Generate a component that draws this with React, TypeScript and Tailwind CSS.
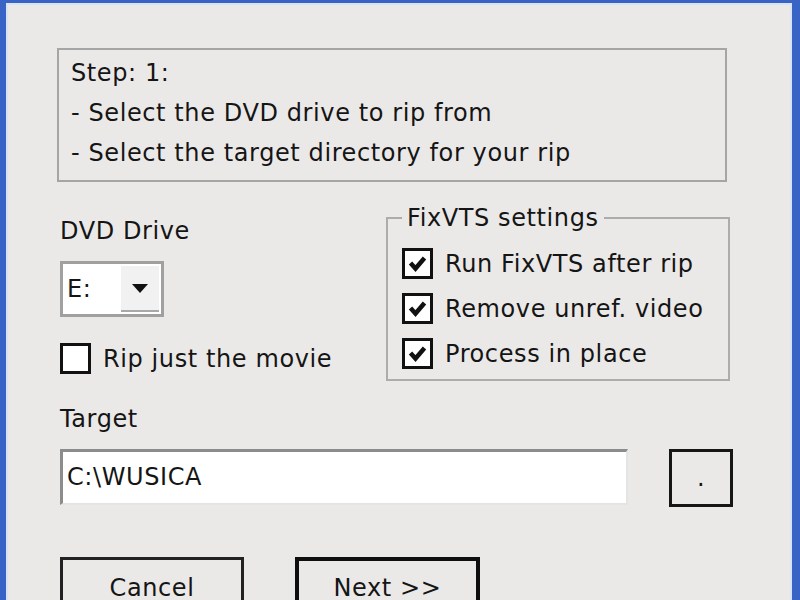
import React from "react";

const font = { fontFamily: '"DejaVu Sans", Verdana, sans-serif' };

function Check({ checked, label }: { checked: boolean; label: string }) {
  return (
    <div className="flex items-center">
      <div className="w-[31px] h-[31px] border-[3px] border-[#111] bg-white flex items-center justify-center shrink-0">
        {checked && (
          <svg width="19" height="17" viewBox="0 0 19 17">
            <path d="M2.5 8 L7.5 13.5 L16.5 3" fill="none" stroke="#111" strokeWidth="4.5" strokeLinejoin="miter" />
          </svg>
        )}
      </div>
      <span className="ml-[12px] text-[24px] leading-[28px] text-[#151515] whitespace-nowrap">{label}</span>
    </div>
  );
}

export default function App() {
  return (
    <div
      className="w-[800px] h-[600px] overflow-hidden bg-[#3a63c6] pl-[6px] pt-[3px] pr-[8px] tracking-[0.6px]"
      style={font}
    >
      <div className="w-full h-[700px] bg-[#d8e3f6] pl-[2px] pt-[2px] pr-[2px]">
        <div className="w-full h-full bg-[#ebe9e8] pl-[49px] pt-[43px] text-[#151515]">
          {/* info box */}
          <div className="w-[670px] h-[134px] border-2 border-[#a5a5a5] pl-[12px] pt-[3px] text-[24px] leading-[40px]">
            <div>Step: 1:</div>
            <div>- Select the DVD drive to rip from</div>
            <div>- Select the target directory for your rip</div>
          </div>

          {/* middle row */}
          <div className="flex items-start">
            <div className="ml-[3px] mt-[35px] w-[326px]">
              <div className="text-[24px] leading-[28px]">DVD Drive</div>
              <div className="mt-[16px] w-[104px] h-[56px] border-[3px] border-[#a0a0a0] bg-white flex items-stretch p-[2px]">
                <div className="flex-1 text-[24px] leading-[46px] pl-[2px]">E:</div>
                <div className="w-[38px] bg-[#f1f1f1] border-b-2 border-[#a8a8a8] flex items-center justify-center">
                  <svg width="16" height="9" viewBox="0 0 16 9">
                    <path d="M0 0 H16 L8 9 Z" fill="#111" />
                  </svg>
                </div>
              </div>
              <div className="mt-[26px]">
                <Check checked={false} label="Rip just the movie" />
              </div>
            </div>

            <fieldset className="mt-[22px] w-[344px] border-2 border-[#acacac] px-[14px] pt-[9px] pb-[3px]">
              <legend className="px-[5px] text-[24px] leading-[28px]">FixVTS settings</legend>
              <div className="h-[45px] flex items-center">
                <Check checked label="Run FixVTS after rip" />
              </div>
              <div className="h-[45px] flex items-center">
                <Check checked label="Remove unref. video" />
              </div>
              <div className="h-[45px] flex items-center">
                <Check checked label="Process in place" />
              </div>
            </fieldset>
          </div>

          {/* target */}
          <div className="ml-[3px] mt-[24px] text-[24px] leading-[28px]">Target</div>
          <div className="ml-[3px] mt-[16px] flex items-start">
            <div className="w-[568px] h-[56px] bg-white border-t-[3px] border-l-[3px] border-[#8c8c8c] border-r-2 border-b-2 border-r-[#e4e4e4] border-b-[#e4e4e4] pl-[4px] text-[24px] leading-[50px]">
              C:\WUSICA
            </div>
            <div className="ml-[41px] w-[64px] h-[58px] border-[3px] border-[#161616] flex items-center justify-center text-[24px] leading-[28px]">
              .
            </div>
          </div>

          {/* buttons */}
          <div className="ml-[3px] mt-[50px] flex">
            <div className="w-[184px] h-[64px] border-[3px] border-[#222] flex items-start justify-center text-[24px] leading-[28px] pt-[14px]">
              Cancel
            </div>
            <div className="ml-[51px] w-[185px] h-[64px] border-[4px] border-[#0e0e0e] flex items-start justify-center text-[24px] leading-[28px] pt-[13px]">
              Next &gt;&gt;
            </div>
          </div>
        </div>
      </div>
    </div>
  );
}
